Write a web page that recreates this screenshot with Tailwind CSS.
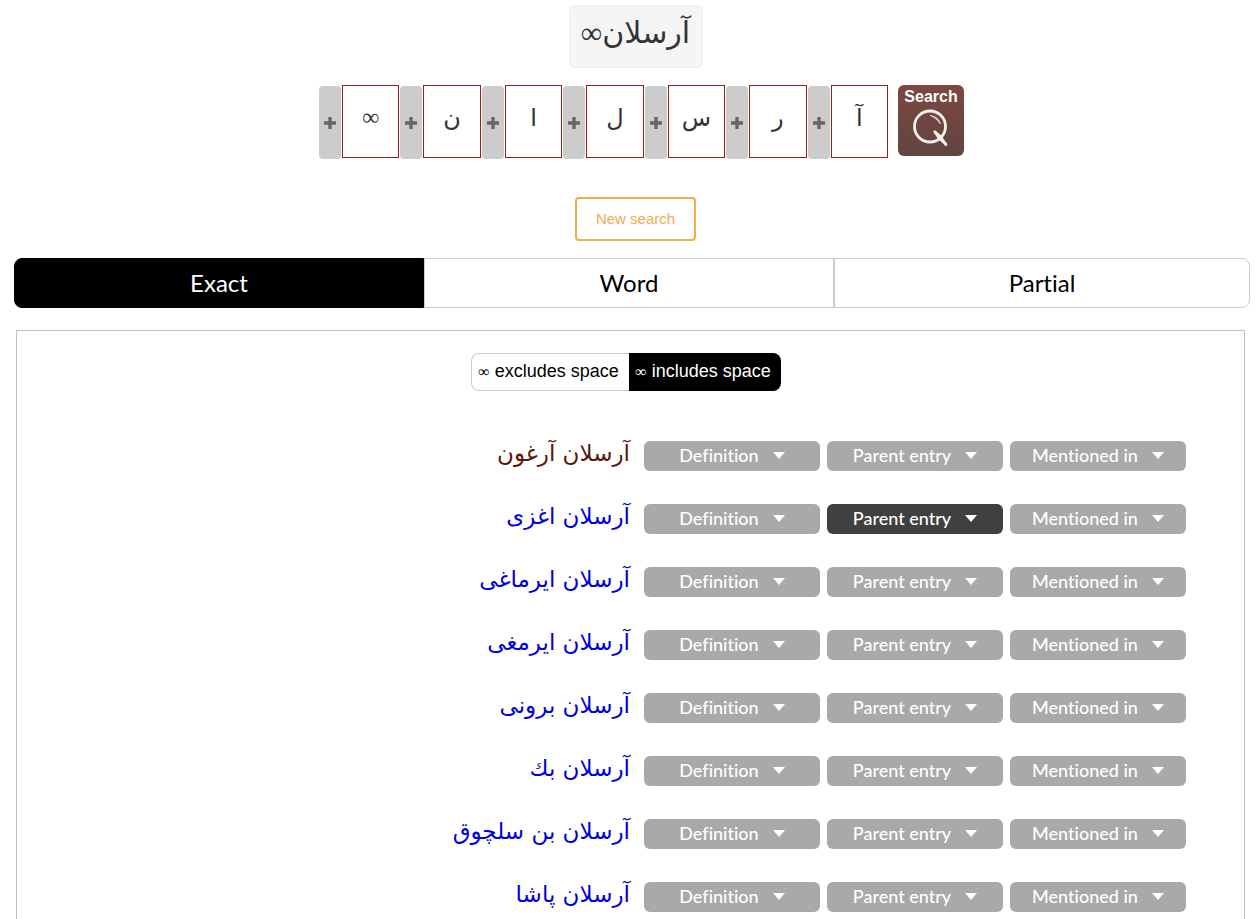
<!DOCTYPE html>
<html lang="en">
<head>
    <meta charset="UTF-8">
    <meta name="viewport" content="width=device-width, initial-scale=1.0">
    <title>آرسلان∞</title>
    <script src="https://cdn.jsdelivr.net/npm/@tailwindcss/browser@4"></script>
</head>
<body class="bg-white font-['Liberation_Sans',sans-serif] text-black">
    <header class="flex flex-col items-center pt-[5px] pl-[14px]">
        <h1 dir="rtl" class="flex h-[63px] w-[134px] justify-center rounded-md border border-[#eeeeee] bg-[#f5f5f5] font-['Liberation_Serif','DejaVu_Sans',serif] text-[30px] leading-[54px] text-[#333333]">آرسلان∞</h1>

        <form id="searchForm" class="mt-[17px] flex gap-[9px] pl-3">
            <div id="letters" class="grid w-[570px] grid-cols-7"></div>
            <button type="submit" class="flex h-[71px] w-[66px] flex-col items-center rounded-md bg-linear-to-b from-[#7f4740] to-[#5f453f] pt-[3px] text-base leading-[18px] font-bold text-white">
                Search
                <svg class="mt-[3px] h-[38px] w-[38px]" viewBox="0 0 38 38" fill="none" stroke="#f5efee" stroke-linecap="round" stroke-linejoin="round">
                    <circle cx="18" cy="17.500" r="15.500" stroke-width="2.800"/>
                    <path d="M18.500 6.500c5 .8 8.800 3.800 10 8.500-3-4-5.500-6.200-10-8.500z" fill="#e0d2d0" stroke="#e0d2d0" stroke-width=".8"/>
                    <path d="M22.500 22.500l4 6.500 7.500 6.500M22.500 22.500l6 4.500 5.500 8.500" stroke-width="2"/>
                    <path d="M23 23l11 12.500" stroke-width="2.800"/>
                </svg>
            </button>
        </form>

        <button type="button" class="mt-[38px] h-11 w-[121px] rounded-sm border-2 border-[#f0ad4e] text-[15px] text-[#f0ad4e]">New search</button>
    </header>

    <nav class="mt-[17px] mr-[7px] ml-[14px] grid h-[50px] grid-cols-[410fr_410fr_416fr] font-[Lato,sans-serif] text-2xl [font-variant-ligatures:none]">
        <button type="button" class="rounded-l-lg border border-black bg-black text-white">Exact</button>
        <button type="button" class="border border-[#cccccc]">Word</button>
        <button type="button" class="rounded-r-lg border border-[#cccccc]">Partial</button>
    </nav>

    <main class="mt-[22px] mr-3 ml-4 border border-[#c0c0c0] pt-[22px]">
        <div class="mr-[9px] flex h-[38px] justify-center text-lg leading-6">
            <button type="button" class="w-[158px] rounded-l-lg border border-r-0 border-[#cccccc] pr-1 pb-px"><span class="font-['Liberation_Serif',serif] text-base">∞</span> excludes space</button>
            <button type="button" class="w-[152px] rounded-r-lg bg-black pr-1 pb-px text-white"><span class="font-['Liberation_Serif',serif] text-base">∞</span> includes space</button>
        </div>
        <ul id="results" class="mt-[50px] mr-[58px] flex flex-col gap-[33px] pb-8"></ul>
    </main>

    <template id="letterTemplate">
        <div class="flex gap-px">
            <button type="button" aria-label="Add letter" class="mt-px flex h-[73px] w-[22px] shrink-0 items-center justify-center rounded-sm bg-[#cccccc]">
                <svg class="h-3 w-3" viewBox="0 0 12 12"><path d="M4.300 0h3.400v4.300H12v3.400H7.700V12H4.300V7.700H0V4.300h4.300z" fill="#666666"/></svg>
            </button>
            <input type="text" dir="rtl" aria-label="Letter" class="mr-px h-[73px] min-w-0 flex-1 border border-[#991b1b] pb-2 text-center font-['Liberation_Serif','DejaVu_Sans',serif] text-2xl text-[#333333]">
        </div>
    </template>

    <template id="rowTemplate">
        <li class="flex h-[30px] items-center justify-end gap-[7px]">
            <a href="#" dir="rtl" class="mr-[7px] pb-1.5 font-['DejaVu_Sans',sans-serif] text-[23px] whitespace-nowrap"></a>
        </li>
    </template>

    <template id="dropTemplate">
        <button type="button" class="flex h-[30px] w-[176px] items-center justify-center gap-[14px] rounded-md bg-[#a9a9a9] pb-0.5 font-[Lato,sans-serif] text-lg font-medium text-white [font-variant-ligatures:none]">
            <span></span>
            <svg class="h-[7px] w-3" viewBox="0 0 12 7"><path d="M0 0h12L6 7z" fill="currentColor"/></svg>
        </button>
    </template>

    <script>
        const letters = ['∞', 'ن', 'ا', 'ل', 'س', 'ر', 'آ'];
        const entries = [
            { text: 'آرسلان آرغون', visited: true },
            { text: 'آرسلان اغزی', active: 'Parent entry' },
            { text: 'آرسلان ایرماغی' },
            { text: 'آرسلان ایرمغی' },
            { text: 'آرسلان برونی' },
            { text: 'آرسلان بك' },
            { text: 'آرسلان بن سلچوق' },
            { text: 'آرسلان پاشا' }
        ];

        const clone = (id) => document.getElementById(id).content.firstElementChild.cloneNode(true);

        letters.forEach((letter) => {
            const box = clone('letterTemplate');
            box.querySelector('input').value = letter;
            document.getElementById('letters').appendChild(box);
        });

        entries.forEach((entry) => {
            const row = clone('rowTemplate');
            const link = row.querySelector('a');
            link.textContent = entry.text;
            link.classList.add(entry.visited ? 'text-[#551a0b]' : 'text-[#0000e0]');

            ['Definition', 'Parent entry', 'Mentioned in'].forEach((label) => {
                const drop = clone('dropTemplate');
                drop.querySelector('span').textContent = label;
                if (entry.active === label) {
                    drop.classList.replace('bg-[#a9a9a9]', 'bg-[#404040]');
                }
                row.appendChild(drop);
            });
            document.getElementById('results').appendChild(row);
        });

        document.getElementById('searchForm').addEventListener('submit', (e) => e.preventDefault());
    </script>
</body>
</html>
